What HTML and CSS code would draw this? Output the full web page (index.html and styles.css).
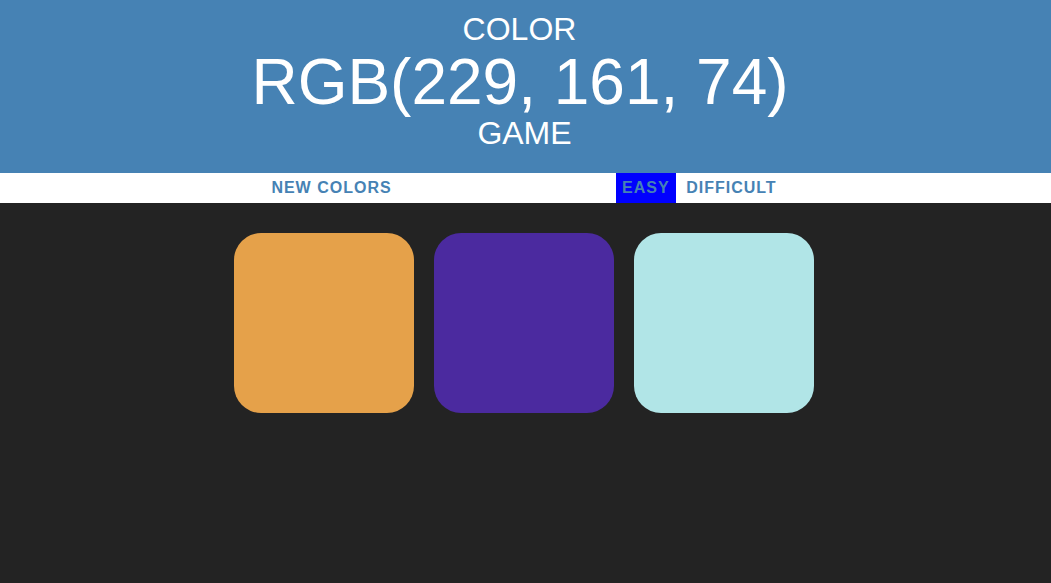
FILE: index.html
```html
<!DOCTYPE html>
<html>
<head>
<meta charset="utf-8">
<title>Color Game</title>
<link rel="stylesheet" href="styles.css">
</head>
<body>
<h1 class="title">
<span class="title-line title-top">Color</span>
<span class="title-line color-display">RGB(229, 161, 74)</span>
<span class="title-line title-bottom">Game</span>
</h1>
<div class="stripe">
<button class="btn">New Colors</button>
<span class="message"></span>
<button class="btn mode selected">Easy</button>
<button class="btn mode">Difficult</button>
</div>
<div class="container">
<div class="square" style="background: rgb(229, 161, 74)"></div>
<div class="square" style="background: rgb(75, 42, 159)"></div>
<div class="square" style="background: rgb(177, 229, 231)"></div>
</div>
</body>
</html>
```
FILE: styles.css
```css
body {
  margin: 0;
  background: #232323;
  font-family: "Liberation Sans", Arial, sans-serif;
}

.title {
  margin: 0;
  padding: 12px 0 24px;
  text-align: center;
  font-weight: normal;
  font-size: 32px;
  color: #ffffff;
  background: steelblue;
  text-transform: uppercase;
}

.title-line {
  display: block;
}

.title-top {
  line-height: 35px;
  padding-right: 12px;
}

.color-display {
  font-size: 64px;
  line-height: 71px;
  padding-right: 11px;
}

.title-bottom {
  line-height: 31px;
  padding-right: 2px;
}

.stripe {
  background: #ffffff;
  height: 30px;
  text-align: center;
  font-size: 16px;
  padding-right: 3px;
}

.btn {
  border: none;
  background: none;
  text-transform: uppercase;
  height: 100%;
  font-family: inherit;
  font-weight: 700;
  font-size: inherit;
  color: steelblue;
  letter-spacing: 1px;
  padding: 1px 6px;
  margin: 0;
  outline: none;
  vertical-align: top;
}

.selected {
  background: #0000ff;
}

.message {
  display: inline-block;
  width: 20%;
}

.container {
  width: 583px;
  margin: 30px auto 0;
  display: flex;
  gap: 20px;
}

.square {
  width: 180px;
  height: 180px;
  border-radius: 15%;
}
```
